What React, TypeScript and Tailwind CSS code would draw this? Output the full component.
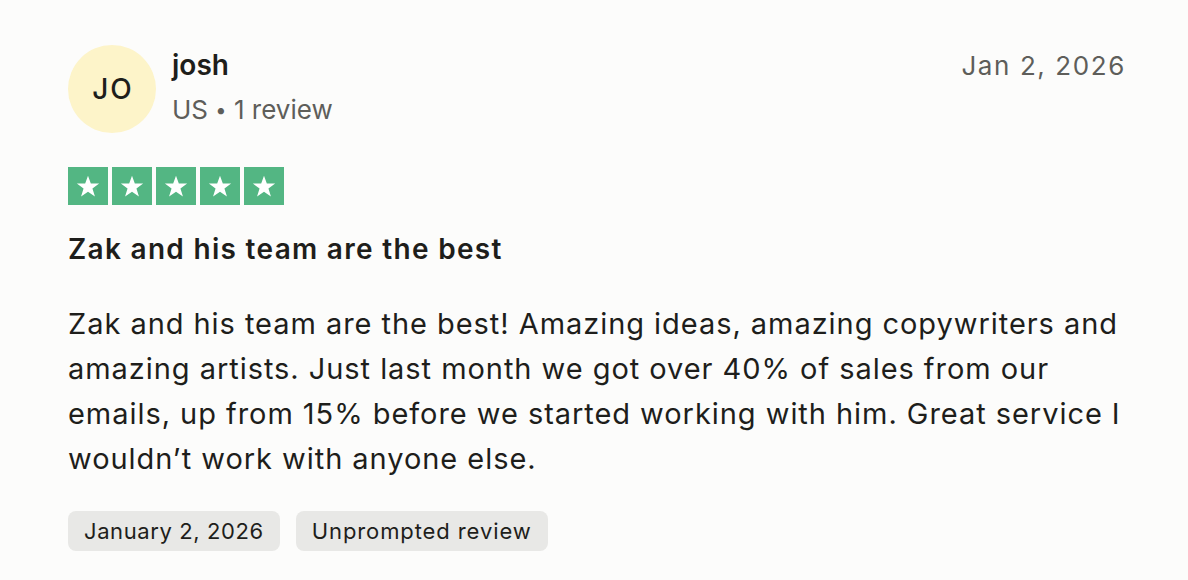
const Star = () => (
  <svg viewBox="0 0 24 24" className="h-[26px] w-[26px]" fill="white">
    <path d="M12 2.5l2.6 7.3h7.7l-6.2 4.6 2.3 7.4L12 17.3l-6.4 4.5 2.3-7.4-6.2-4.6h7.7z" />
  </svg>
);

export default function App() {
  return (
    <div
      className="min-h-[580px] w-[1188px] bg-[#fcfcfb] pl-[68px] pr-[62px] pt-[45px] text-[#1e1e1b]"
      style={{ fontFamily: "Inter, 'Liberation Sans', sans-serif" }}
    >
      <div className="flex items-start justify-between">
        <div className="flex items-start gap-4">
          <div className="flex h-[88px] w-[88px] items-center justify-center rounded-full bg-[#fdf4c9] pl-[2px] text-[28px] font-medium tracking-[2px]">
            JO
          </div>
          <div className="pt-[2px]">
            <div className="text-[28px] font-semibold leading-[36px]">josh</div>
            <div className="mt-[11px] text-[26px] leading-[32px] text-[#5e5e5a]">
              US <span className="text-[20px] align-[2px]">•</span> 1 review
            </div>
          </div>
        </div>
        <div className="pt-[5px] text-[26px] leading-[32px] tracking-[1.6px] text-[#5e5e5a]">Jan 2, 2026</div>
      </div>

      <div className="mt-[34px] flex gap-[4px]">
        {[0, 1, 2, 3, 4].map((i) => (
          <div key={i} className="flex h-[38px] w-[40px] items-center justify-center bg-[#53b683]">
            <Star />
          </div>
        ))}
      </div>

      <h2 className="mt-[26px] text-[28px] font-semibold leading-[36px] tracking-[1.3px]">Zak and his team are the best</h2>

      <p className="mt-[34px] max-w-[1060px] text-[29px] leading-[45px] tracking-[0.95px]">
        Zak and his team are the best! Amazing ideas, amazing copywriters and amazing artists. Just last month we got over
        40% of sales from our emails, up from 15% before we started working with him. Great service I wouldn’t work with
        anyone else.
      </p>

      <div className="mt-[30px] flex gap-4">
        <span className="rounded-lg bg-[#e8e8e6] px-4 py-[6px] text-[22px] leading-[28px] tracking-[0.6px]">January 2, 2026</span>
        <span className="rounded-lg bg-[#e8e8e6] px-4 py-[6px] text-[22px] leading-[28px] tracking-[0.9px]">Unprompted review</span>
      </div>
    </div>
  );
}
